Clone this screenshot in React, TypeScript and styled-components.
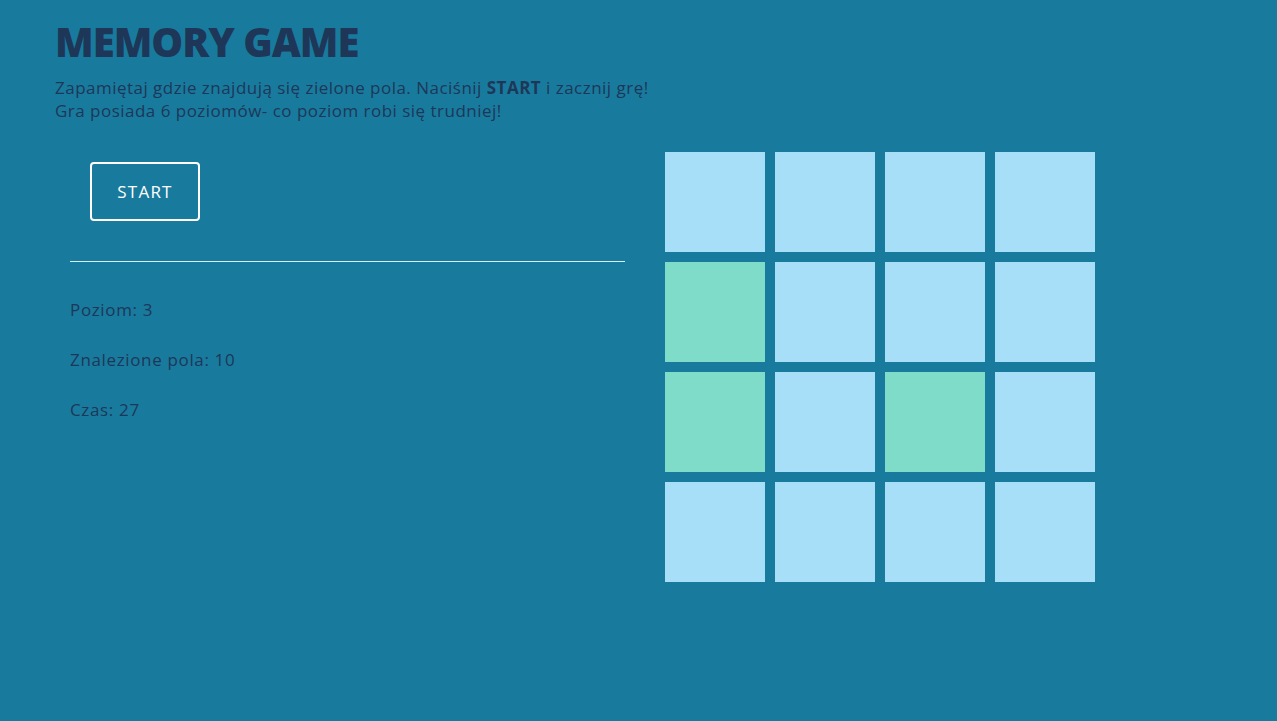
import React from "react";
import styled, { createGlobalStyle } from "styled-components";

const Global = createGlobalStyle`
  html, body { margin: 0; padding: 0; background: #187b9d; }
  body { font-family: "Open Sans", "Noto Sans", sans-serif; color: #1e3759; }
  * { box-sizing: border-box; }
`;

const Page = styled.div`
  min-height: 721px;
  padding: 16px 55px 0;
`;

const Title = styled.h1`
  margin: 0;
  font-size: 40px;
  line-height: 52px;
  font-weight: 800;
  letter-spacing: -1px;
  color: #1e3759;
`;

const Intro = styled.p`
  margin: 8px 0 0;
  font-size: 17px;
  line-height: 23px;
  letter-spacing: 0.48px;
  b { font-weight: 700; }
`;

const Main = styled.div`
  display: flex;
  align-items: flex-start;
  gap: 40px;
  margin-top: 30px;
`;

const Panel = styled.div`
  width: 570px;
  padding: 10px 0 0 15px;
`;

const StartButton = styled.button`
  margin-left: 20px;
  width: 110px;
  height: 59px;
  border: 2px solid #ffffff;
  border-radius: 4px;
  background: transparent;
  color: #ffffff;
  font-family: "Open Sans", sans-serif;
  font-size: 17px;
  font-weight: 500;
  letter-spacing: 1.2px;
  cursor: pointer;
`;

const Divider = styled.hr`
  margin: 40px 0 0;
  border: none;
  border-top: 1px solid #d6eef5;
  height: 0;
`;

const Stats = styled.div`
  display: flex;
  flex-direction: column;
  gap: 26px;
  margin-top: 36px;
`;

const Stat = styled.div`
  font-size: 17px;
  line-height: 24px;
  letter-spacing: 0.65px;
`;

const Board = styled.div`
  display: grid;
  grid-template-columns: repeat(4, 100px);
  grid-auto-rows: 100px;
  gap: 10px;
`;

const Cell = styled.div<{ $found: boolean }>`
  background: ${(p) => (p.$found ? "#7fdcc8" : "#a8dff8")};
`;

const found = [4, 8, 10];

export default function App() {
  return (
    <Page>
      <Global />
      <Title>MEMORY GAME</Title>
      <Intro>
        Zapamiętaj gdzie znajdują się zielone pola. Naciśnij <b>START</b> i zacznij grę!
        <br />
        Gra posiada 6 poziomów- co poziom robi się trudniej!
      </Intro>
      <Main>
        <Panel>
          <StartButton>START</StartButton>
          <Divider />
          <Stats>
            <Stat>Poziom: 3</Stat>
            <Stat>Znalezione pola: 10</Stat>
            <Stat>Czas: 27</Stat>
          </Stats>
        </Panel>
        <Board>
          {Array.from({ length: 16 }, (_, i) => (
            <Cell key={i} $found={found.includes(i)} />
          ))}
        </Board>
      </Main>
    </Page>
  );
}
